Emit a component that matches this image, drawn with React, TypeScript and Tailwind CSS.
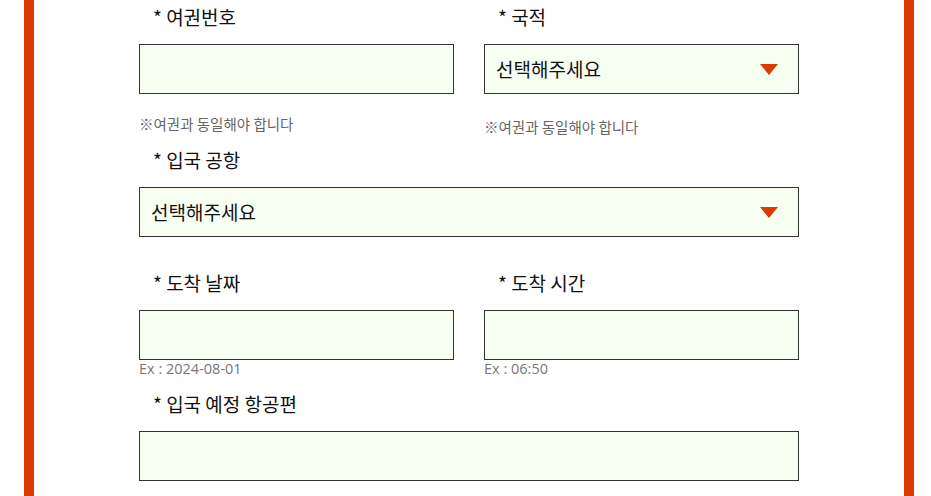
const kr = { fontFamily: '"Noto Sans CJK KR", "Noto Sans", sans-serif' };
const ex = { fontFamily: '"Open Sans", "Noto Sans", sans-serif' };

function Label({ text }: { text: string }) {
  return (
    <div className="pl-[14px] text-[19px] leading-[26px] text-[#111111] mb-[14px]" style={kr}>
      * {text}
    </div>
  );
}

function TextBox() {
  return <div className="h-[50px] border border-[#333333] bg-[#f7fff3]" />;
}

function SelectBox() {
  return (
    <div className="flex h-[50px] items-center justify-between border border-[#333333] bg-[#f7fff3] pl-[11px] pr-[20px]">
      <span className="text-[19px] text-[#111111]" style={kr}>
        선택해주세요
      </span>
      <svg width="18" height="11" viewBox="0 0 18 11">
        <polygon points="0,0 18,0 9,11" fill="#dd3a00" />
      </svg>
    </div>
  );
}

export default function App() {
  return (
    <div className="min-h-[496px] bg-white">
      <div className="ml-6 w-[890px] min-h-[496px] border-x-[10px] border-[#dd3a00] bg-white pt-1">
        <div className="mx-auto w-[660px]">
          <div className="grid grid-cols-2 gap-x-[30px]">
            <div>
              <Label text="여권번호" />
              <TextBox />
              <p className="mt-[21px] text-[14.5px] leading-[18px] text-[#666666]" style={kr}>
                ※여권과 동일해야 합니다
              </p>
            </div>
            <div>
              <Label text="국적" />
              <SelectBox />
              <p className="mt-[24px] text-[14.5px] leading-[18px] text-[#666666]" style={kr}>
                ※여권과 동일해야 합니다
              </p>
            </div>
          </div>

          <div className="mt-[11px]">
            <Label text="입국 공항" />
            <SelectBox />
          </div>

          <div className="mt-[33px] grid grid-cols-2 gap-x-[30px]">
            <div>
              <Label text="도착 날짜" />
              <TextBox />
              <p className="text-[14.5px] leading-[18px] text-[#777777]" style={ex}>
                Ex : 2024-08-01
              </p>
            </div>
            <div>
              <Label text="도착 시간" />
              <TextBox />
              <p className="text-[14.5px] leading-[18px] text-[#777777]" style={ex}>
                Ex : 06:50
              </p>
            </div>
          </div>

          <div className="mt-[13px]">
            <Label text="입국 예정 항공편" />
            <TextBox />
          </div>
        </div>
      </div>
    </div>
  );
}
